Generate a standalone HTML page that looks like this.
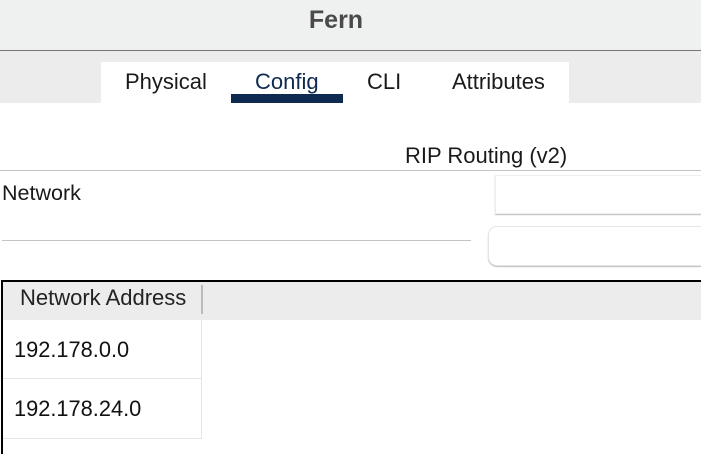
<!DOCTYPE html>
<html><head><meta charset="utf-8"><style>
*{margin:0;padding:0;box-sizing:border-box}
body{width:701px;height:454px;overflow:hidden;background:#fff;font-family:"Liberation Sans",Arial,sans-serif;position:relative;color:#1a1a1a}
.a{position:absolute;white-space:nowrap}
</style></head><body>
<div class="a" style="left:0;top:0;width:701px;height:50px;background:#eff0f0"></div>
<div class="a" style="left:0;top:6px;width:672px;text-align:center;font-size:25px;font-weight:bold;color:#4a4a4a">Fern</div>
<div class="a" style="left:0;top:50px;width:701px;height:1px;background:#777"></div>
<div class="a" style="left:0;top:51px;width:701px;height:52px;background:#ececec"></div>
<div class="a" style="left:101px;top:62px;width:468px;height:41px;background:#fff"></div>
<div class="a" style="left:125px;top:69px;font-size:22px">Physical</div>
<div class="a" style="left:255px;top:69px;font-size:22px;color:#0e2a50">Config</div>
<div class="a" style="left:367px;top:69px;font-size:22px">CLI</div>
<div class="a" style="left:452px;top:69px;font-size:22px">Attributes</div>
<div class="a" style="left:231px;top:94px;width:112px;height:9px;background:#0e2a50"></div>
<div class="a" style="left:405px;top:143px;font-size:22px">RIP Routing (v2)</div>
<div class="a" style="left:0;top:170px;width:701px;height:1px;background:#c4c4c4"></div>
<div class="a" style="left:2px;top:181px;font-size:21.5px">Network</div>
<div class="a" style="left:495px;top:175px;width:210px;height:39px;background:#fff;border:1px solid #eee;box-shadow:0 1px 1px #bbb"></div>
<div class="a" style="left:2px;top:240px;width:469px;height:1px;background:#c4c4c4"></div>
<div class="a" style="left:488px;top:226px;width:220px;height:40px;background:#fff;border:1px solid #e6e6e6;border-radius:9px;box-shadow:0 1px 1px #bbb"></div>
<div class="a" style="left:1px;top:280px;width:700px;height:2px;background:#000"></div>
<div class="a" style="left:1px;top:280px;width:2px;height:174px;background:#000"></div>
<div class="a" style="left:3px;top:282px;width:698px;height:38px;background:#ececec"></div>
<div class="a" style="left:20px;top:285px;font-size:22px;color:#222">Network Address</div>
<div class="a" style="left:201px;top:285px;width:2px;height:29px;background:#bbb"></div>
<div class="a" style="left:201px;top:320px;width:1px;height:118px;background:#e4e4e4"></div>
<div class="a" style="left:3px;top:378px;width:199px;height:1px;background:#e4e4e4"></div>
<div class="a" style="left:3px;top:438px;width:199px;height:1px;background:#e4e4e4"></div>
<div class="a" style="left:14px;top:337px;font-size:21.8px;color:#111">192.178.0.0</div>
<div class="a" style="left:14px;top:396px;font-size:21.8px;color:#111">192.178.24.0</div>
</body></html>
